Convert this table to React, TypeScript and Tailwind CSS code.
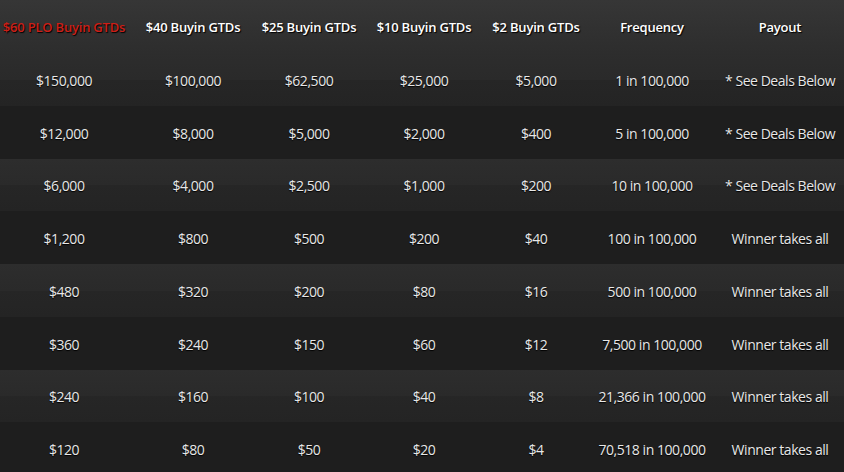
import React from "react";

const headers = [
  "$60 PLO Buyin GTDs",
  "$40 Buyin GTDs",
  "$25 Buyin GTDs",
  "$10 Buyin GTDs",
  "$2 Buyin GTDs",
  "Frequency",
  "Payout",
];

const rows: string[][] = [
  ["$150,000", "$100,000", "$62,500", "$25,000", "$5,000", "1 in 100,000", "* See Deals Below"],
  ["$12,000", "$8,000", "$5,000", "$2,000", "$400", "5 in 100,000", "* See Deals Below"],
  ["$6,000", "$4,000", "$2,500", "$1,000", "$200", "10 in 100,000", "* See Deals Below"],
  ["$1,200", "$800", "$500", "$200", "$40", "100 in 100,000", "Winner takes all"],
  ["$480", "$320", "$200", "$80", "$16", "500 in 100,000", "Winner takes all"],
  ["$360", "$240", "$150", "$60", "$12", "7,500 in 100,000", "Winner takes all"],
  ["$240", "$160", "$100", "$40", "$8", "21,366 in 100,000", "Winner takes all"],
  ["$120", "$80", "$50", "$20", "$4", "70,518 in 100,000", "Winner takes all"],
];

const grid = "grid grid-cols-[128px_130px_102px_128px_96px_136px_120px]";

export default function App() {
  return (
    <div
      className="w-[844px] h-[472px] overflow-hidden bg-[#1f1f1f] text-[#e8e8e8]"
      style={{ fontFamily: '"Open Sans", "Noto Sans", sans-serif' }}
    >
      <div className={`${grid} h-[53px] shrink-0 items-center pt-[2px] bg-gradient-to-b from-[#363636] to-[#2d2d2d] text-[13px] font-semibold [text-shadow:1px_1px_1px_#000]`}>
        {headers.map((h, i) => (
          <div
            key={h}
            className={`text-center whitespace-nowrap tracking-[-0.2px] ${i === 0 ? "text-[#cc1f17]" : "text-white"}`}
          >
            {h}
          </div>
        ))}
      </div>
      {rows.map((r, ri) => (
        <div
          key={ri}
          className={`${grid} h-[52.75px] items-center pt-[2px] text-[14px] tracking-[-0.45px] [text-shadow:0_1px_1px_#000] ${
            ri % 2 === 0
              ? "bg-[linear-gradient(to_bottom,#2d2d2d_0%,#2a2a2a_50%,#262626_51%,#242424_100%)]"
              : "bg-[#1e1e1e]"
          }`}
        >
          {r.map((c, ci) => (
            <div key={ci} className="text-center whitespace-nowrap">
              {c}
            </div>
          ))}
        </div>
      ))}
    </div>
  );
}
